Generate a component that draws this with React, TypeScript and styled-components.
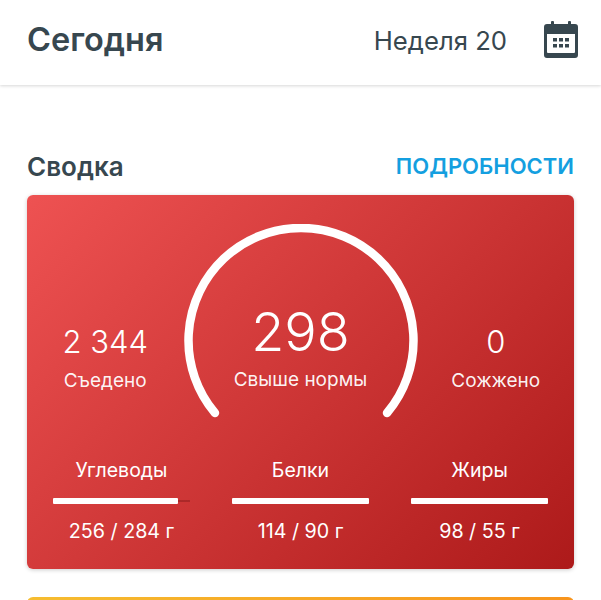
import styled, { createGlobalStyle } from "styled-components"

const GlobalStyle = createGlobalStyle`
  html, body {
    margin: 0;
    background: #fff;
    font-family: "Inter", "Noto Sans", sans-serif;
  }
`

const macros = [
  { name: "Углеводы", value: "256 / 284 г", fill: 91 },
  { name: "Белки", value: "114 / 90 г", fill: 100 },
  { name: "Жиры", value: "98 / 55 г", fill: 100 },
]

export default function App() {
  return (
    <>
      <GlobalStyle />
      <Header>
        <Title>Сегодня</Title>
        <Week>Неделя 20</Week>
        <CalendarIcon />
      </Header>
      <Content>
        <SectionHead>
          <SectionTitle>Сводка</SectionTitle>
          <MoreLink>ПОДРОБНОСТИ</MoreLink>
        </SectionHead>
        <SummaryCard>
          <StatsRow>
            <SideStat>
              <SideNumber>2 344</SideNumber>
              <StatLabel>Съедено</StatLabel>
            </SideStat>
            <Gauge>
              <GaugeArc />
              <GaugeText>
                <GaugeNumber>298</GaugeNumber>
                <StatLabel>Свыше нормы</StatLabel>
              </GaugeText>
            </Gauge>
            <SideStat>
              <SideNumber>0</SideNumber>
              <StatLabel>Сожжено</StatLabel>
            </SideStat>
          </StatsRow>
          <MacroRow>
            {macros.map((m) => (
              <Macro key={m.name}>
                <MacroName>{m.name}</MacroName>
                <Track>
                  <Fill style={{ width: `${m.fill}%` }} />
                </Track>
                <MacroValue>{m.value}</MacroValue>
              </Macro>
            ))}
          </MacroRow>
        </SummaryCard>
        <NextCard />
      </Content>
    </>
  )
}

const CalendarIcon = () => (
  <svg width="34" height="37" viewBox="0 0 34 37">
    <rect x="7" y="0" width="3" height="6" rx="1" fill="#37474f" />
    <rect x="24" y="0" width="3" height="6" rx="1" fill="#37474f" />
    <path
      fillRule="evenodd"
      fill="#37474f"
      d="M3 3h28a3 3 0 0 1 3 3v28a3 3 0 0 1-3 3H3a3 3 0 0 1-3-3V6a3 3 0 0 1 3-3zM3 13v18a1 1 0 0 0 1 1h26a1 1 0 0 0 1-1V13z"
    />
    {[9, 15, 21].map((x) =>
      [17, 23].map((y) => <rect key={`${x}-${y}`} x={x} y={y} width="4" height="3.5" fill="#37474f" />)
    )}
  </svg>
)

const GaugeArc = () => (
  <svg width="234" height="200" viewBox="0 0 234 200">
    <path
      d="M31 189 A112.5 112.5 0 1 1 203 189"
      fill="none"
      stroke="#fff"
      strokeWidth="8.5"
      strokeLinecap="round"
    />
  </svg>
)

const Header = styled.header`
  height: 85px;
  box-sizing: border-box;
  padding: 0 23px 7px 27px;
  display: flex;
  align-items: center;
  background: #fff;
  box-shadow: 0 1px 3px rgba(0, 0, 0, 0.16);
`

const Title = styled.h1`
  margin: 0 auto 0 0;
  font-size: 32.5px;
  font-weight: 600;
  color: #37474f;
`

const Week = styled.span`
  font-size: 25.7px;
  color: #37474f;
  margin: 3px 37px 0 0;
`

const Content = styled.main`
  height: 515px;
  box-sizing: border-box;
  overflow: hidden;
  padding: 67px 27px 0;
`

const SectionHead = styled.div`
  display: flex;
  justify-content: space-between;
  align-items: center;
  height: 28px;
  margin-bottom: 15px;
`

const SectionTitle = styled.h2`
  margin: 0;
  font-size: 26px;
  font-weight: 600;
  color: #37474f;
`

const MoreLink = styled.a`
  font-size: 22px;
  font-weight: 600;
  color: #149fe0;
`

const SummaryCard = styled.section`
  height: 374px;
  box-sizing: border-box;
  padding: 29px 26px 0;
  border-radius: 6px;
  background: linear-gradient(135deg, #ee5252 0%, #ad1a1a 100%);
  box-shadow: 0 1px 4px rgba(0, 0, 0, 0.2);
  color: #fff;
`

const StatsRow = styled.div`
  display: grid;
  grid-template-columns: 1fr 234px 1fr;
  margin: 0 -4px;
`

const SideStat = styled.div`
  display: flex;
  flex-direction: column;
  align-items: center;
  padding: 98px 22px 0 0;
  &:last-child {
    padding: 98px 0 0 22px;
  }
`

const SideNumber = styled.div`
  font-size: 31px;
  font-weight: 300;
  line-height: 40px;
  white-space: nowrap;
`

const StatLabel = styled.div`
  font-size: 19px;
  line-height: 24px;
  margin-top: 7px;
  white-space: nowrap;
  color: rgba(255, 255, 255, 0.95);
`

const Gauge = styled.div`
  position: relative;
  height: 200px;
`

const GaugeText = styled.div`
  position: absolute;
  left: 0;
  right: 0;
  top: 79px;
  display: flex;
  flex-direction: column;
  align-items: center;
`

const GaugeNumber = styled.div`
  font-size: 54px;
  font-weight: 300;
  line-height: 58px;
`

const MacroRow = styled.div`
  display: grid;
  grid-template-columns: repeat(3, 1fr);
  gap: 42px;
  margin-top: 34px;
`

const Macro = styled.div`
  display: flex;
  flex-direction: column;
  align-items: center;
`

const MacroName = styled.div`
  font-size: 19.5px;
  line-height: 24px;
`

const Track = styled.div`
  width: 100%;
  height: 6px;
  margin: 16px 0 15px;
  border-radius: 1px;
  background: linear-gradient(transparent 35%, rgba(120, 20, 20, 0.4) 35%, rgba(120, 20, 20, 0.4) 65%, transparent 65%);
`

const Fill = styled.div`
  height: 100%;
  border-radius: 1px;
  background: #fff;
`

const MacroValue = styled.div`
  font-size: 19.7px;
  line-height: 24px;
`

const NextCard = styled.section`
  height: 120px;
  margin-top: 28px;
  border-radius: 6px;
  background: linear-gradient(90deg, #f6bd30 0%, #f8941c 100%);
`
